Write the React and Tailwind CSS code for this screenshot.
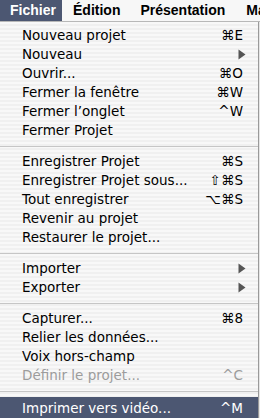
import React from 'react'

const ITEMS = [
  { label: 'Nouveau projet', key: '⌘E' },
  { label: 'Nouveau', arrow: true },
  { label: 'Ouvrir...', key: '⌘O' },
  { label: 'Fermer la fenêtre', key: '⌘W' },
  { label: 'Fermer l’onglet', key: '^W' },
  { label: 'Fermer Projet' },
  'sep',
  { label: 'Enregistrer Projet', key: '⌘S' },
  { label: 'Enregistrer Projet sous...', key: '⇧⌘S' },
  { label: 'Tout enregistrer', key: '⌥⌘S' },
  { label: 'Revenir au projet' },
  { label: 'Restaurer le projet...' },
  'sep',
  { label: 'Importer', arrow: true },
  { label: 'Exporter', arrow: true },
  'sep',
  { label: 'Capturer...', key: '⌘8' },
  { label: 'Relier les données...' },
  { label: 'Voix hors-champ' },
  { label: 'Définir le projet...', key: '^C', disabled: true },
  'sep',
  { label: 'Imprimer vers vidéo...', key: '^M', active: true },
]

function Arrow() {
  return (
    <svg width="8" height="11" viewBox="0 0 8 11" className="mr-[-3px]">
      <path d="M0.5 0.5 L7.5 5.5 L0.5 10.5 Z" fill="#555" />
    </svg>
  )
}

function Row({ item }) {
  const color = item.active ? 'text-white' : item.disabled ? 'text-[#9c9c9c]' : 'text-black'
  return (
    <div
      className={`flex items-center pl-[22px] pr-[15px] ${color} ${
        item.active ? 'bg-[#4c5772] h-[21px] pt-[1px]' : 'h-[19px]'
      }`}
    >
      <span className="flex-1 whitespace-nowrap">{item.label}</span>
      {item.key && <span className="whitespace-nowrap">{item.key}</span>}
      {item.arrow && <Arrow />}
    </div>
  )
}

export default function App() {
  return (
    <div
      className="w-[260px] h-[418px] overflow-hidden bg-[#e6e6e6] text-[13.5px] leading-[19px]"
      style={{ fontFamily: '"DejaVu Sans", "Liberation Sans", sans-serif' }}
    >
      <div
        className="flex items-center h-[22px] whitespace-nowrap bg-[#f7f7f7] border-b border-[#b8b8b8] font-bold text-[14px] text-black"
        style={{ fontFamily: '"Liberation Sans", Arial, sans-serif' }}
      >
        <div className="h-full flex items-center pl-[10px] pr-[7px] w-[62px] bg-[#4c5772] text-white">Fichier</div>
        <div className="ml-[11px]">Édition</div>
        <div className="ml-[20px]">Présentation</div>
        <div className="ml-[21px]">Ma</div>
      </div>
      <div className="w-[259px] h-[396px] border-r border-[#9a9a9a] bg-[#f5f5f5] pt-[4px] [background-image:repeating-linear-gradient(180deg,#f8f8f8_0px,#f8f8f8_2px,#f0f0f0_2px,#f0f0f0_4px)]">
        {ITEMS.map((item, i) =>
          item === 'sep' ? (
            <div key={i} className="h-[12px] flex items-center pt-[1px]">
              <div className="h-px w-full bg-[#c6c6c6]" />
            </div>
          ) : (
            <Row key={i} item={item} />
          )
        )}
      </div>
    </div>
  )
}
